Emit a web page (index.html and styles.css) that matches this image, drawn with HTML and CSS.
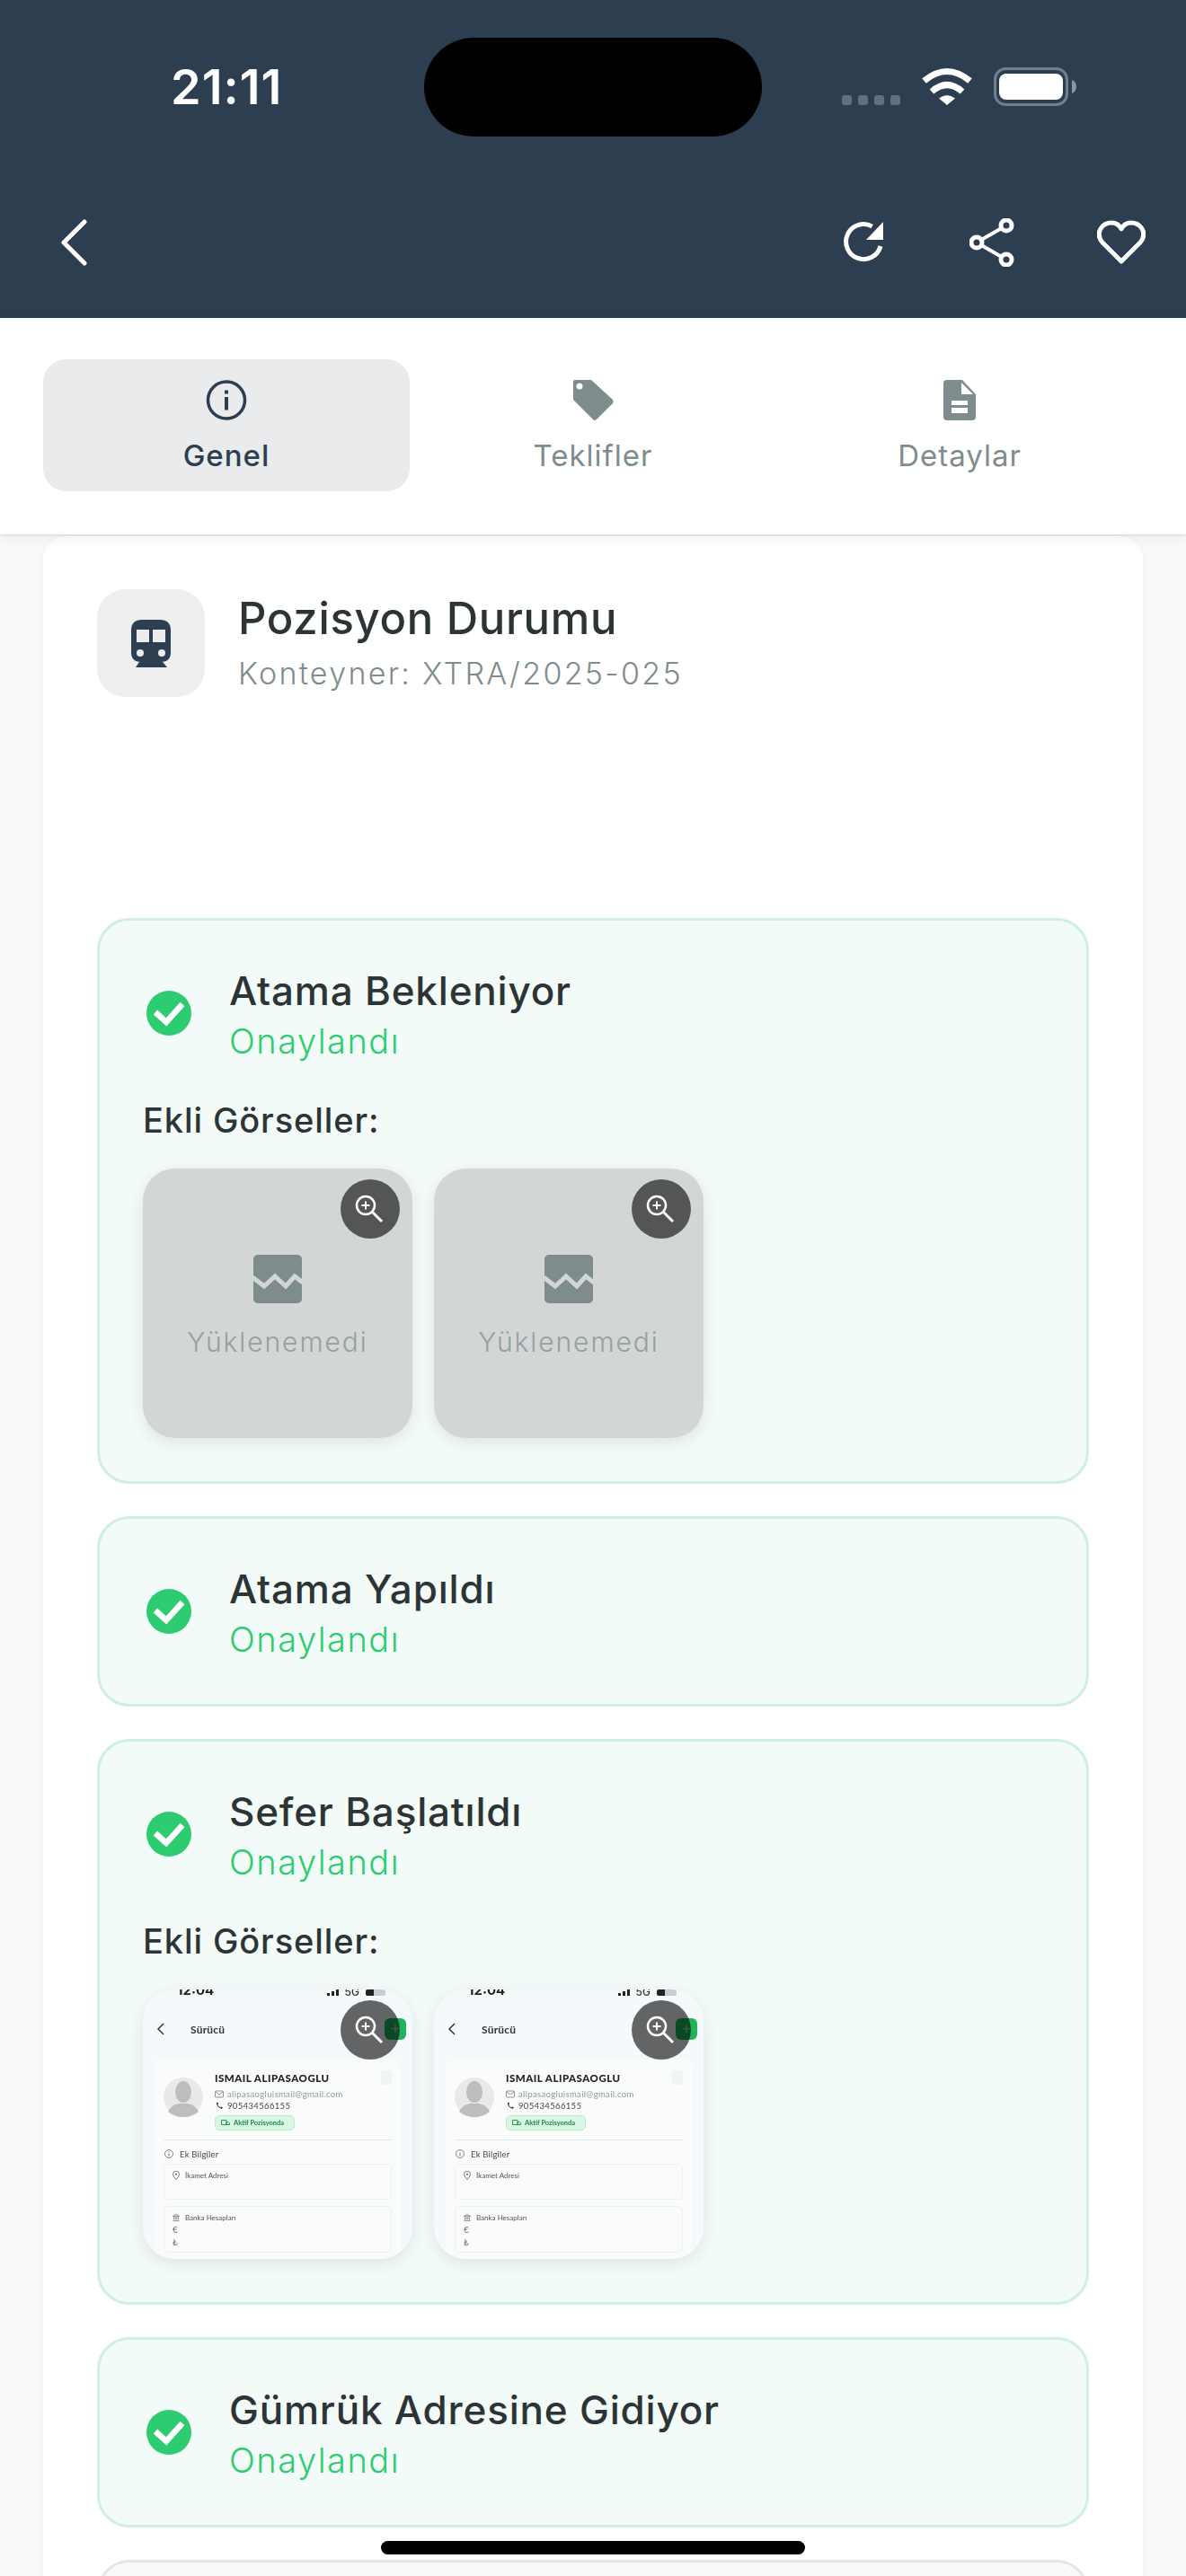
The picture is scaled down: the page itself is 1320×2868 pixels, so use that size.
FILE: index.html
```html
<!DOCTYPE html>
<html lang="tr">
<head>
<meta charset="utf-8">
<title>Pozisyon Durumu</title>
<link rel="stylesheet" href="styles.css">
</head>
<body>
<div class="phone">
  <header class="header">
    <div class="status">
      <span class="time">21:11</span>
      <span class="island"></span>
      <div class="status-right">
        <span class="dots"><i></i><i></i><i></i><i></i></span>
        <svg class="wifi" viewBox="0 0 58 42"><path d="M3.500 15Q29-6 54.500 15M12 27Q29 12 46 27" fill="none" stroke="#fff" stroke-width="7"/><path d="M20 34.500Q29 27.500 38 34.500L29 42Z" fill="#fff"/></svg>
        <svg class="battery" viewBox="0 0 92 43"><rect x="1.500" y="1.500" width="80" height="40" rx="12" fill="none" stroke="#708090" stroke-width="3"/><rect x="6" y="7" width="71" height="29" rx="8" fill="#fff"/><path d="M87 14q5 2 5 7.500t-5 7.500z" fill="#8996a3"/></svg>
      </div>
    </div>
    <nav class="nav">
      <svg class="back" viewBox="0 0 30 52"><path d="M26 3 3 26l23 23" fill="none" stroke="#fff" stroke-width="5" stroke-linecap="round" stroke-linejoin="round"/></svg>
      <div class="nav-actions">
        <svg class="refresh" viewBox="0 0 46 46"><path d="M31.700 5.100A19.500 19.500 0 1 0 41 27" fill="none" stroke="#fff" stroke-width="5"/><path d="M44 0V20H25Z" fill="#fff"/></svg>
        <svg class="share" viewBox="0 0 50 54"><path d="M8 27 41 8M8 27 41 46" stroke="#fff" stroke-width="4"/><circle cx="41" cy="8" r="6" fill="#2C3E50" stroke="#fff" stroke-width="5"/><circle cx="8" cy="27" r="6" fill="#2C3E50" stroke="#fff" stroke-width="5"/><circle cx="41" cy="46" r="6" fill="#2C3E50" stroke="#fff" stroke-width="5"/></svg>
        <svg class="heart" viewBox="0 0 54 50"><path d="M27 46 6 25C-3 14 6 3 16 3c5 0 9 3 11 7 2-4 6-7 11-7 10 0 19 11 10 22Z" fill="none" stroke="#fff" stroke-width="5" stroke-linejoin="round"/></svg>
      </div>
    </nav>
  </header>

  <div class="tabs">
    <div class="tab tab-active">
      <svg class="tab-icon" viewBox="0 0 45 45"><circle cx="22.500" cy="22.500" r="20.500" fill="none" stroke="#2C3E50" stroke-width="3.500"/><rect x="20.500" y="11.500" width="4" height="4" fill="#2C3E50"/><rect x="20.500" y="19" width="4" height="14.500" fill="#2C3E50"/></svg>
      <span>Genel</span>
    </div>
    <div class="tab">
      <svg class="tab-icon" viewBox="0 0 46 45"><path fill-rule="evenodd" d="M3 0H21L45 22Q46 24 45 26L27 44Q25 46 23 44L1 22V2Q1 0 3 0ZM8 3.500A3.500 3.500 0 1 0 8 10.500 3.500 3.500 0 1 0 8 3.500Z" fill="#7F8C8D"/></svg>
      <span>Teklifler</span>
    </div>
    <div class="tab">
      <svg class="tab-icon doc-icon" viewBox="0 0 36 45"><path d="M4 0H21L36 16V41Q36 45 32 45H4Q0 45 0 41V4Q0 0 4 0Z" fill="#7F8C8D"/><path d="M20 3V16H33Z" fill="#fff"/><path d="M9 23H27V28H9ZM9 31H27V37H9Z" fill="#fff"/></svg>
      <span>Detaylar</span>
    </div>
  </div>

  <main class="card">
    <div class="card-head">
      <div class="card-icon">
        <svg class="train" viewBox="0 0 44 53"><path d="M0 12Q0 0 12 0H32Q44 0 44 12V36Q44 47 33 47H11Q0 47 0 36Z" fill="#2C3E50"/><path d="M9 47H35L40 53H5Z" fill="#2C3E50"/><path d="M6 11H20V25H6ZM24 11H38V25H24Z" fill="#EAECEE"/><circle cx="10" cy="37" r="4" fill="#EAECEE"/><circle cx="34" cy="37" r="4" fill="#EAECEE"/></svg>
      </div>
      <div>
        <h1 class="card-title">Pozisyon Durumu</h1>
        <p class="card-sub">Konteyner: XTRA/2025-025</p>
      </div>
    </div>

    <section class="step">
      <div class="step-head">
        <svg class="check" viewBox="0 0 50 50"><circle cx="25" cy="25" r="25" fill="#2ECC71"/><path d="M10 24l12 11L40 15" fill="none" stroke="#fff" stroke-width="6.500"/></svg>
        <div class="step-text"><h2 class="step-title">Atama Bekleniyor</h2><p class="step-sub">Onaylandı</p></div>
      </div>
      <h3 class="images-label">Ekli Görseller:</h3>
      <div class="thumbs">
        <div class="thumb thumb-failed">
          <svg class="broken" viewBox="0 0 54 54"><rect width="54" height="54" rx="5" fill="#7F8C8D"/><path d="M-1 25 12 35 24 24 36 35 46 24 55 31" fill="none" stroke="#D2D7D6" stroke-width="5"/></svg>
          <span class="failed-text">Yüklenemedi</span>
          <span class="zoom-btn"><svg viewBox="0 0 66 66"><circle cx="28" cy="29" r="10" fill="none" stroke="#fff" stroke-width="2.500"/><path d="M28 24.500v9M23.500 29h9" stroke="#fff" stroke-width="2"/><path d="M35.500 36.500 46 47" stroke="#fff" stroke-width="3"/></svg></span>
        </div>
        <div class="thumb thumb-failed">
          <svg class="broken" viewBox="0 0 54 54"><rect width="54" height="54" rx="5" fill="#7F8C8D"/><path d="M-1 25 12 35 24 24 36 35 46 24 55 31" fill="none" stroke="#D2D7D6" stroke-width="5"/></svg>
          <span class="failed-text">Yüklenemedi</span>
          <span class="zoom-btn"><svg viewBox="0 0 66 66"><circle cx="28" cy="29" r="10" fill="none" stroke="#fff" stroke-width="2.500"/><path d="M28 24.500v9M23.500 29h9" stroke="#fff" stroke-width="2"/><path d="M35.500 36.500 46 47" stroke="#fff" stroke-width="3"/></svg></span>
        </div>
      </div>
    </section>

    <section class="step">
      <div class="step-head">
        <svg class="check" viewBox="0 0 50 50"><circle cx="25" cy="25" r="25" fill="#2ECC71"/><path d="M10 24l12 11L40 15" fill="none" stroke="#fff" stroke-width="6.500"/></svg>
        <div class="step-text"><h2 class="step-title">Atama Yapıldı</h2><p class="step-sub">Onaylandı</p></div>
      </div>
    </section>

    <section class="step">
      <div class="step-head">
        <svg class="check" viewBox="0 0 50 50"><circle cx="25" cy="25" r="25" fill="#2ECC71"/><path d="M10 24l12 11L40 15" fill="none" stroke="#fff" stroke-width="6.500"/></svg>
        <div class="step-text"><h2 class="step-title">Sefer Başlatıldı</h2><p class="step-sub">Onaylandı</p></div>
      </div>
      <h3 class="images-label">Ekli Görseller:</h3>
      <div class="thumbs">
        <div class="thumb">
          <div class="mini">
            <div class="mini-status"><span>12:04</span><span class="mini-signal"><i class="b1"></i><i class="b2"></i><i class="b3"></i><b>5G</b><i class="mini-batt"></i></span></div>
            <div class="mini-nav">
              <svg class="mini-back" viewBox="0 0 8 14"><path d="M7 1 1 7l6 6" fill="none" stroke="#333" stroke-width="1.500"/></svg>
              <span class="mini-title">Sürücü</span>
              <span class="mini-add">+</span>
            </div>
            <div class="mini-card">
              <div class="mini-profile">
                <svg class="mini-avatar" viewBox="0 0 44 44"><circle cx="22" cy="22" r="22" fill="#E9E9E9"/><ellipse cx="22" cy="16" rx="9" ry="12" fill="#BDBDBD"/><path d="M5 38q3-7 12-9h10q9 2 12 9-7 6-17 6T5 38Z" fill="#BDBDBD"/></svg>
                <div class="mini-info">
                  <div class="mini-name">ISMAIL ALIPASAOGLU</div>
                  <div class="mini-line mini-mail"><svg viewBox="0 0 10 8"><rect x=".5" y=".5" width="9" height="7" rx="1" fill="none" stroke="#777" stroke-width=".8"/><path d="m1 1.500 4 3 4-3" fill="none" stroke="#777" stroke-width=".8"/></svg>alipasaogluismail@gmail.com</div>
                  <div class="mini-line mini-phone"><svg viewBox="0 0 10 10"><path d="M1.500 1Q1 6 8 9l1.500-2-2-1-1 1Q4 6 3 3.500l1-1L3 .5Z" fill="#444"/></svg>905434566155</div>
                  <div class="mini-badge"><svg viewBox="0 0 10 7"><path d="M.5.500h5.500v5H.5ZM6 2.500h2l1.500 1.500v1.500H6Z" fill="none" stroke="#1B8A43" stroke-width=".9"/></svg>Aktif Pozisyonda</div>
                </div>
                <span class="mini-ghost"></span>
              </div>
              <div class="mini-divider"></div>
              <div class="mini-section"><svg viewBox="0 0 10 10"><circle cx="5" cy="5" r="4.500" fill="none" stroke="#555" stroke-width=".7"/><path d="M5 4.500v3M5 2.500v1" stroke="#555" stroke-width=".8"/></svg>Ek Bilgiler</div>
              <div class="mini-box mini-box-address"><div class="mini-box-head"><svg viewBox="0 0 8 10"><path d="M4 9.500Q.5 6 .5 3.700a3.500 3.500 0 0 1 7 0Q7.500 6 4 9.500Z" fill="none" stroke="#555" stroke-width=".8"/><circle cx="4" cy="3.700" r="1" fill="#555"/></svg>İkamet Adresi</div></div>
              <div class="mini-box mini-box-bank"><div class="mini-box-head"><svg viewBox="0 0 10 10"><path d="M.5 3 5 .5 9.500 3ZM2 4v4M4 4v4M6 4v4M8 4v4M.5 9.500h9" fill="none" stroke="#555" stroke-width=".8"/></svg>Banka Hesapları</div><div class="mini-cur">€</div><div class="mini-cur mini-cur-try">₺</div></div>
            </div>
          </div>
          <span class="zoom-btn"><svg viewBox="0 0 66 66"><circle cx="28" cy="29" r="10" fill="none" stroke="#fff" stroke-width="2.500"/><path d="M28 24.500v9M23.500 29h9" stroke="#fff" stroke-width="2"/><path d="M35.500 36.500 46 47" stroke="#fff" stroke-width="3"/></svg></span>
        </div>
        <div class="thumb">
          <div class="mini">
            <div class="mini-status"><span>12:04</span><span class="mini-signal"><i class="b1"></i><i class="b2"></i><i class="b3"></i><b>5G</b><i class="mini-batt"></i></span></div>
            <div class="mini-nav">
              <svg class="mini-back" viewBox="0 0 8 14"><path d="M7 1 1 7l6 6" fill="none" stroke="#333" stroke-width="1.500"/></svg>
              <span class="mini-title">Sürücü</span>
              <span class="mini-add">+</span>
            </div>
            <div class="mini-card">
              <div class="mini-profile">
                <svg class="mini-avatar" viewBox="0 0 44 44"><circle cx="22" cy="22" r="22" fill="#E9E9E9"/><ellipse cx="22" cy="16" rx="9" ry="12" fill="#BDBDBD"/><path d="M5 38q3-7 12-9h10q9 2 12 9-7 6-17 6T5 38Z" fill="#BDBDBD"/></svg>
                <div class="mini-info">
                  <div class="mini-name">ISMAIL ALIPASAOGLU</div>
                  <div class="mini-line mini-mail"><svg viewBox="0 0 10 8"><rect x=".5" y=".5" width="9" height="7" rx="1" fill="none" stroke="#777" stroke-width=".8"/><path d="m1 1.500 4 3 4-3" fill="none" stroke="#777" stroke-width=".8"/></svg>alipasaogluismail@gmail.com</div>
                  <div class="mini-line mini-phone"><svg viewBox="0 0 10 10"><path d="M1.500 1Q1 6 8 9l1.500-2-2-1-1 1Q4 6 3 3.500l1-1L3 .5Z" fill="#444"/></svg>905434566155</div>
                  <div class="mini-badge"><svg viewBox="0 0 10 7"><path d="M.5.500h5.500v5H.5ZM6 2.500h2l1.500 1.500v1.500H6Z" fill="none" stroke="#1B8A43" stroke-width=".9"/></svg>Aktif Pozisyonda</div>
                </div>
                <span class="mini-ghost"></span>
              </div>
              <div class="mini-divider"></div>
              <div class="mini-section"><svg viewBox="0 0 10 10"><circle cx="5" cy="5" r="4.500" fill="none" stroke="#555" stroke-width=".7"/><path d="M5 4.500v3M5 2.500v1" stroke="#555" stroke-width=".8"/></svg>Ek Bilgiler</div>
              <div class="mini-box mini-box-address"><div class="mini-box-head"><svg viewBox="0 0 8 10"><path d="M4 9.500Q.5 6 .5 3.700a3.500 3.500 0 0 1 7 0Q7.500 6 4 9.500Z" fill="none" stroke="#555" stroke-width=".8"/><circle cx="4" cy="3.700" r="1" fill="#555"/></svg>İkamet Adresi</div></div>
              <div class="mini-box mini-box-bank"><div class="mini-box-head"><svg viewBox="0 0 10 10"><path d="M.5 3 5 .5 9.500 3ZM2 4v4M4 4v4M6 4v4M8 4v4M.5 9.500h9" fill="none" stroke="#555" stroke-width=".8"/></svg>Banka Hesapları</div><div class="mini-cur">€</div><div class="mini-cur mini-cur-try">₺</div></div>
            </div>
          </div>
          <span class="zoom-btn"><svg viewBox="0 0 66 66"><circle cx="28" cy="29" r="10" fill="none" stroke="#fff" stroke-width="2.500"/><path d="M28 24.500v9M23.500 29h9" stroke="#fff" stroke-width="2"/><path d="M35.500 36.500 46 47" stroke="#fff" stroke-width="3"/></svg></span>
        </div>
      </div>
    </section>

    <section class="step">
      <div class="step-head">
        <svg class="check" viewBox="0 0 50 50"><circle cx="25" cy="25" r="25" fill="#2ECC71"/><path d="M10 24l12 11L40 15" fill="none" stroke="#fff" stroke-width="6.500"/></svg>
        <div class="step-text"><h2 class="step-title">Gümrük Adresine Gidiyor</h2><p class="step-sub">Onaylandı</p></div>
      </div>
    </section>

    <section class="step step-pending"></section>
  </main>

  <div class="home-bar"></div>
</div>
</body>
</html>
```

FILE: styles.css
```css
* { box-sizing: border-box; }
html, body { margin: 0; padding: 0; overflow: hidden; }
body { width: 1320px; height: 2868px; background: #F8F9FA; font-family: Inter, "Noto Sans", sans-serif; }
h1, h2, h3, p { margin: 0; }
svg { display: block; flex: none; }

.phone { position: relative; width: 1320px; height: 2868px; overflow: hidden; }

/* header */
.header { height: 354px; background: #2C3E50; padding-top: 42px; }
.status { display: flex; height: 110px; padding-left: 190px; }
.time { width: 282px; color: #fff; font: 600 54px/110px Inter, sans-serif; letter-spacing: 1px; }
.island { width: 376px; height: 110px; background: #000; border-radius: 55px; }
.status-right { display: flex; align-items: flex-end; gap: 23px; margin-left: 89px; margin-top: 33px; height: 43px; }
.dots { display: flex; gap: 7px; margin-bottom: 1px; }
.dots i { width: 11px; height: 11px; border-radius: 3px; background: #5F7082; }
.wifi { width: 58px; height: 42px; margin-bottom: 1px; }
.battery { width: 92px; height: 43px; }
.nav { display: flex; align-items: center; justify-content: space-between; height: 54px; margin-top: 91px; padding: 0 45px 0 68px; }
.back { width: 30px; height: 52px; }
.nav-actions { display: flex; align-items: center; gap: 93px; }
.refresh { width: 46px; height: 46px; }
.share { width: 50px; height: 54px; margin: 0 -1px 0 1px; }
.heart { width: 54px; height: 50px; }

/* tabs */
.tabs { position: relative; z-index: 2; display: flex; height: 241px; padding: 46px 48px 0; background: #fff; box-shadow: 0 1px 2px rgba(0,0,0,.12), 0 4px 16px rgba(0,0,0,.06); }
.tab { width: 408px; height: 147px; border-radius: 26px; padding-top: 23px; display: flex; flex-direction: column; align-items: center; color: #7F8C8D; font-size: 33px; font-weight: 400; line-height: 44px; letter-spacing: 1px; }
.tab-icon { width: 46px; height: 45px; margin-bottom: 17px; }
.doc-icon { width: 36px; }
.tab-active { background: #E9EBED; color: #2C3E50; font-weight: 500; }

/* card */
.card { width: 1224px; margin: 2px 48px 0; padding: 59px 60px 0; background: #fff; border-radius: 26px; box-shadow: 0 2px 10px rgba(0,0,0,.04); }
.card-head { display: flex; align-items: center; gap: 37px; height: 120px; margin-bottom: 246px; }
.card-icon { width: 120px; height: 120px; border-radius: 32px; background: #ECEEF0; display: flex; align-items: center; justify-content: center; }
.train { width: 44px; height: 53px; }
.card-title { color: #2D3436; font-size: 49px; line-height: 64px; font-weight: 500; letter-spacing: .7px; margin-top: -4px; }
.card-sub { color: #7F8C8D; font-size: 34px; line-height: 44px; font-weight: 300; letter-spacing: 2.300px; margin-top: 7px; }

/* steps */
.step { width: 1104px; padding: 48px; margin-bottom: 36px; background: #F2FBF7; border: 3px solid #CFEFE0; border-radius: 36px; }
.step-head { display: flex; align-items: center; gap: 42px; height: 110px; padding-left: 4px; }
.step-text { padding-top: 2px; }
.check { width: 50px; height: 50px; }
.step-title { color: #2D3436; font-size: 44px; line-height: 60px; font-weight: 500; letter-spacing: .8px; }
.step-sub { color: #2ECC71; font-size: 38px; line-height: 52px; font-weight: 300; letter-spacing: 1.500px; }
.images-label { color: #2D3436; font-size: 38px; line-height: 50px; font-weight: 500; letter-spacing: .9px; margin: 39px 0 29px; }
.thumbs { display: flex; gap: 24px; }
.thumb { position: relative; width: 300px; height: 300px; border-radius: 36px; box-shadow: 0 5px 18px rgba(0,0,0,.09); }
.thumb-failed { background: #D2D7D6; display: flex; flex-direction: column; align-items: center; padding-top: 96px; }
.broken { width: 54px; height: 54px; }
.failed-text { margin-top: 21px; color: #95A09F; font-size: 30px; font-weight: 300; line-height: 44px; letter-spacing: 1.900px; }
.zoom-btn { position: absolute; top: 12px; right: 14px; width: 66px; height: 66px; border-radius: 50%; background: rgba(0,0,0,.6); }
.zoom-btn svg { width: 66px; height: 66px; }
.step-pending { height: 212px; background: #F8F9FA; border-color: #E3E6E8; margin-bottom: 0; }

/* miniature screenshot */
.mini { width: 300px; height: 300px; border-radius: 36px; overflow: hidden; background: #F4FAFC; color: #333; font-family: Lato, Inter, sans-serif; filter: blur(.45px); }
.mini-status { display: flex; justify-content: space-between; height: 8px; padding: 0 30px 0 38px; overflow: hidden; color: #222; font: 700 15px/1 Inter, sans-serif; }
.mini-status > span:first-child { margin-top: -7px; }
.mini-signal { display: flex; align-items: flex-end; gap: 2px; height: 7px; font-size: 12px; line-height: 8px; color: #333; }
.mini-signal b { margin: 0 5px 0 5px; font-weight: 500; }
.mini-signal i { width: 3px; background: #222; }
.mini-signal .b1 { height: 3px; }
.mini-signal .b2 { height: 5px; }
.mini-signal .b3 { height: 7px; }
.mini-signal .mini-batt { width: 22px; height: 7px; border-radius: 2px; background: linear-gradient(90deg, #222 40%, #c7cdd0 40%); }
.mini-nav { display: flex; align-items: center; height: 24px; margin-top: 24px; padding-left: 16px; }
.mini-back { width: 8px; height: 14px; }
.mini-title { margin-left: 29px; font-size: 12px; font-weight: 700; letter-spacing: .2px; }
.mini-add { width: 24px; height: 24px; margin-left: auto; margin-right: 7px; border-radius: 6px; background: #22B35A; color: #9be0b5; text-align: center; font-size: 18px; line-height: 23px; }
.mini-card { margin: 22px 13px 0; padding: 12px 10px 0; height: 222px; background: #FAFCFC; border-radius: 8px; }
.mini-profile { display: flex; align-items: center; height: 68px; }
.mini-avatar { width: 44px; height: 44px; margin-top: -8px; }
.mini-info { margin-left: 13px; }
.mini-name { font-size: 11.500px; line-height: 14px; font-weight: 900; letter-spacing: .5px; color: #222; }
.mini-line { display: flex; align-items: center; gap: 4px; font-size: 9.500px; line-height: 13px; letter-spacing: .35px; }
.mini-line svg { width: 10px; height: 9px; }
.mini-mail { margin-top: 4px; color: #8E989C; }
.mini-phone { color: #444; }
.mini-badge { display: flex; align-items: center; gap: 4px; width: 89px; height: 17px; margin-top: 4px; padding-left: 6px; border: 1px solid #BCEBCC; border-radius: 5px; background: #DAF6E5; color: #1B8A43; font-size: 7.500px; font-weight: 700; white-space: nowrap; }
.mini-badge svg { width: 10px; height: 7px; }
.mini-ghost { width: 12px; height: 16px; margin-left: auto; margin-bottom: 52px; border-radius: 3px; background: #F1F4F5; }
.mini-divider { height: 1px; margin-top: 9px; background: #E4E8EA; }
.mini-section { display: flex; align-items: center; gap: 7px; height: 12px; margin: 9px 0 5px 1px; color: #444; font-size: 9.500px; letter-spacing: .2px; }
.mini-section svg { width: 10px; height: 10px; }
.mini-box { border: 1px solid #EDF1F3; border-radius: 5px; background: #FAFBFD; padding: 7px 0 0 9px; color: #555; font-size: 8px; }
.mini-box-address { height: 40px; margin-bottom: 7px; }
.mini-box-bank { height: 52px; }
.mini-box-head { display: flex; align-items: center; gap: 6px; line-height: 10px; }
.mini-box-head svg { width: 8px; height: 10px; }
.mini-cur { margin-top: 3px; font-size: 10px; line-height: 10px; color: #777; }
.mini-cur-try { margin-top: 4px; }

.home-bar { position: absolute; left: 424px; top: 2829px; width: 472px; height: 15px; border-radius: 8px; background: #000; z-index: 3; }
```
